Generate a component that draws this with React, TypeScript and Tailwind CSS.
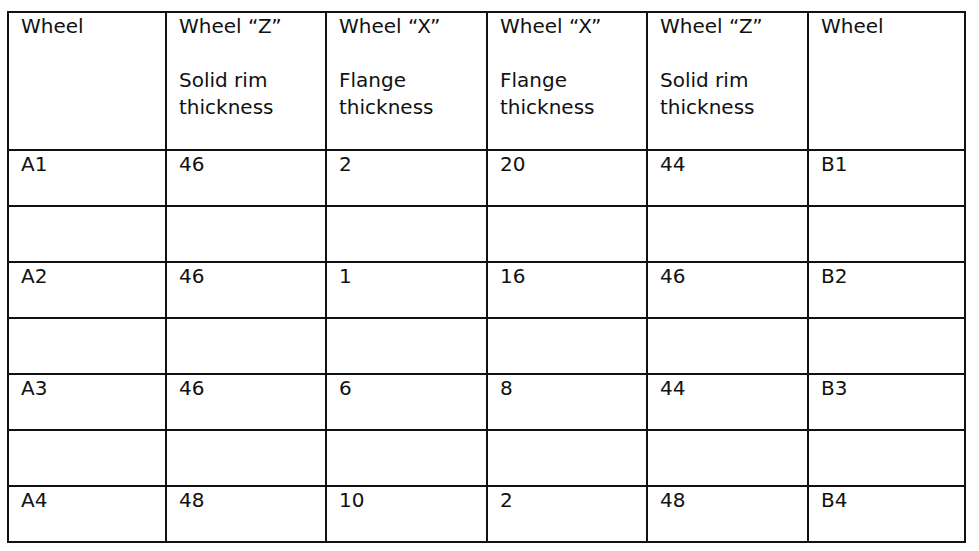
const COLS = [158, 160, 161, 160, 161, 157];

const HEADER: string[][] = [
  ["Wheel"],
  ["Wheel “Z”", "", "Solid rim", "thickness"],
  ["Wheel “X”", "", "Flange", "thickness"],
  ["Wheel “X”", "", "Flange", "thickness"],
  ["Wheel “Z”", "", "Solid rim", "thickness"],
  ["Wheel"],
];

const ROWS: string[][] = [
  ["A1", "46", "2", "20", "44", "B1"],
  ["", "", "", "", "", ""],
  ["A2", "46", "1", "16", "46", "B2"],
  ["", "", "", "", "", ""],
  ["A3", "46", "6", "8", "44", "B3"],
  ["", "", "", "", "", ""],
  ["A4", "48", "10", "2", "48", "B4"],
];

export default function App() {
  return (
    <div className="w-[979px] h-[551px] bg-white pt-[11px] pl-[7px] text-[#111] font-['DejaVu_Sans',sans-serif] text-[20px] leading-[27px]">
      <table className="table-fixed border-collapse w-[959px]">
        <colgroup>
          {COLS.map((w, i) => (
            <col key={i} style={{ width: w }} />
          ))}
        </colgroup>
        <thead>
          <tr className="h-[138px]">
            {HEADER.map((lines, i) => (
              <th key={i} className="border-2 border-[#111] align-top text-left font-normal px-3 pt-0">
                {lines.map((l, j) => (
                  <div key={j} className="h-[27px]">
                    {l}
                  </div>
                ))}
              </th>
            ))}
          </tr>
        </thead>
        <tbody>
          {ROWS.map((row, r) => (
            <tr key={r} className="h-[56px]">
              {row.map((c, i) => (
                <td key={i} className="border-2 border-[#111] align-top px-3 pt-0">
                  {c}
                </td>
              ))}
            </tr>
          ))}
        </tbody>
      </table>
    </div>
  );
}
